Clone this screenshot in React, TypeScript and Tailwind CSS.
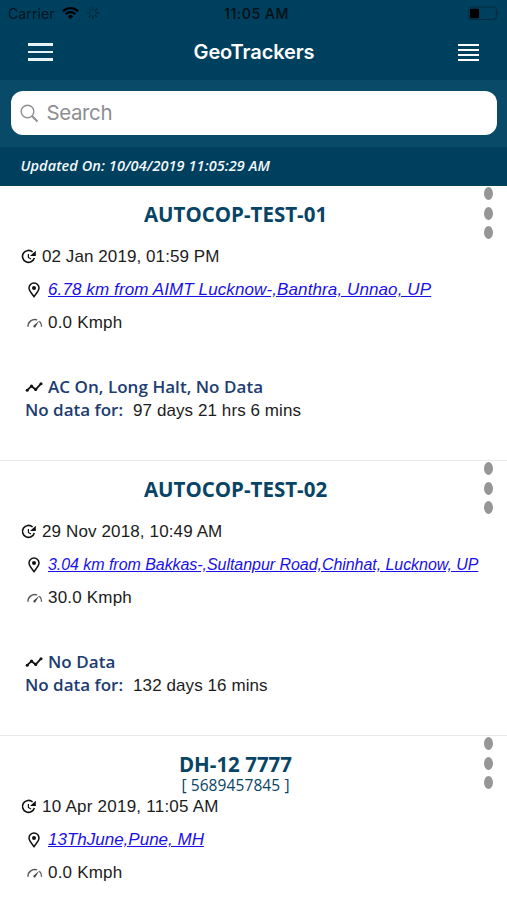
import React from 'react';

interface Vehicle {
  name: string;
  code?: string;
  date: string;
  dateClass?: string;
  location: string;
  locationClass: string;
  speed: string;
  status?: string;
  noData?: string;
}

const vehicles: Vehicle[] = [
  {
    name: 'AUTOCOP-TEST-01',
    date: '02 Jan 2019, 01:59 PM',
    location: '6.78 km from AIMT Lucknow-,Banthra, Unnao, UP',
    locationClass: 'tracking-[0.11px]',
    speed: '0.0 Kmph',
    status: 'AC On, Long Halt, No Data',
    noData: '97 days 21 hrs 6 mins',
  },
  {
    name: 'AUTOCOP-TEST-02',
    date: '29 Nov 2018, 10:49 AM',
    dateClass: 'tracking-[0.13px]',
    location: '3.04 km from Bakkas-,Sultanpur Road,Chinhat, Lucknow, UP',
    locationClass: 'text-[16px] tracking-[-0.05px]',
    speed: '30.0 Kmph',
    status: 'No Data',
    noData: '132 days 16 mins',
  },
  {
    name: 'DH-12 7777',
    code: '[ 5689457845 ]',
    date: '10 Apr 2019, 11:05 AM',
    dateClass: 'tracking-[0.24px]',
    location: '13ThJune,Pune, MH',
    locationClass: 'tracking-[0px]',
    speed: '0.0 Kmph',
  },
];

const ClockIcon = () => (
  <svg className="w-4 h-4 shrink-0" viewBox="0 0 16 16" fill="none" stroke="#111" strokeWidth="1.600">
    <path d="M11.600 3A6 6 0 1 0 13.300 9" />
    <path d="M14.800 1.700v5.300H9z" fill="#111" stroke="none" />
    <path d="M7.400 5v3.500l2.600 1.500" strokeWidth="1.200" />
  </svg>
);

const PinIcon = () => (
  <svg className="w-3 h-4 shrink-0" viewBox="0 0 12 16" fill="none" stroke="#111" strokeWidth="1.500">
    <path d="M6 14.600C3.800 11.500 1 8.700 1 6a5 5 0 0 1 10 0c0 2.700-2.800 5.500-5 8.600z" />
    <circle cx="6" cy="5.900" r="2" fill="#111" stroke="none" />
  </svg>
);

const GaugeIcon = () => (
  <svg className="w-4 h-3 shrink-0" viewBox="0 0 16 12" fill="none" stroke="#555" strokeWidth="1.300">
    <path d="M1 9.800A6.800 6.800 0 0 1 10.200 3M12.400 4.300a6.800 6.800 0 0 1 2.200 5.500" />
    <path d="M12.200 3.800L8.700 9.600A1.200 1.200 0 1 1 7 8.300z" fill="#444" stroke="none" />
  </svg>
);

const TrendIcon = () => (
  <svg className="w-[18px] h-3 shrink-0" viewBox="0 0 18 12" fill="none" stroke="#111" strokeWidth="1.800">
    <path d="M2 9.400l4.500-4.200 4.200 3.300L16 2.700" />
    <g fill="#111" stroke="none">
      <circle cx="2.200" cy="9.300" r="1.500" />
      <circle cx="6.500" cy="5.100" r="1.600" />
      <circle cx="10.700" cy="8.400" r="1.600" />
      <circle cx="16" cy="2.700" r="1.500" />
    </g>
  </svg>
);

const StatusBar = () => (
  <div className="h-[27px] grid grid-cols-3 items-center px-2 text-[14px] text-[#03141d] font-['Inter',sans-serif]">
    <div className="flex items-center">
      <span className="tracking-[0.1px]">Carrier</span>
      <svg className="w-[17px] h-3 ml-[7px] -mt-0.5" viewBox="0 0 17 12" fill="none" stroke="#000" strokeWidth="2.300">
        <path d="M.9 4.300a10.700 10.700 0 0 1 15.200 0" />
        <path d="M3.700 7.200a6.800 6.800 0 0 1 9.600 0" />
        <path d="M8.500 12L5.900 9.300a3.700 3.700 0 0 1 5.200 0z" fill="#000" stroke="none" />
      </svg>
      <svg className="w-3 h-3 ml-2 -mt-0.5" viewBox="0 0 12 12" stroke="#061c29" strokeWidth="1.200">
        <path d="M6 0v3.500" opacity=".6" />
        <path d="M10.200 1.800L7.800 4.200" />
        <path d="M12 6H8.500" />
        <path d="M10.200 10.200L7.800 7.800" opacity=".9" />
        <path d="M6 12V8.500" opacity=".8" />
        <path d="M1.800 10.200l2.400-2.400" opacity=".7" />
        <path d="M0 6h3.500" opacity=".6" />
        <path d="M1.800 1.800l2.400 2.400" opacity=".5" />
      </svg>
    </div>
    <div className="text-center font-semibold whitespace-nowrap pl-[6px] tracking-[0.5px]">11:05 AM</div>
    <div className="flex justify-end">
      <svg className="w-[33px] h-[15px]" viewBox="0 0 33 15">
        <rect x="2.500" y="1" width="28" height="12.500" rx="3" fill="none" stroke="#052c40" strokeWidth="1.200" />
        <rect x="4" y="2.700" width="9" height="9.500" rx="1" fill="#000" />
        <path d="M31.500 5.200c1.600.6 1.600 3.700 0 4.300z" fill="#052c40" />
      </svg>
    </div>
  </div>
);

const VehicleRow = ({ vehicle }: { vehicle: Vehicle }) => (
  <div className="relative h-[275px] border-b border-[#e9e9e9] text-[#1c1c1c] text-[17px] whitespace-nowrap">
    {/* Row menu */}
    <button className="absolute right-[14px] top-[1px] flex flex-col gap-[6.500px]">
      {[0, 1, 2].map(i => (
        <span key={i} className="block w-[9px] h-[13px] rounded-[50%] bg-[#969696]" />
      ))}
    </button>

    <div className="h-[58px] pt-[15px] pr-9 text-center text-[#084465] font-['Open_Sans',sans-serif]">
      <h2 className="h-[26px] leading-[26px] text-[20.500px] font-bold">{vehicle.name}</h2>
      {vehicle.code && (
        <p className="h-4 leading-4 text-[15.500px] font-medium tracking-[0.1px]">{vehicle.code}</p>
      )}
    </div>

    <div className="h-[26px] flex items-center pl-[21px] gap-[5px]">
      <ClockIcon />
      <span className={vehicle.dateClass || 'tracking-[0.08px]'}>{vehicle.date}</span>
    </div>
    <div className="h-10 flex items-center pl-[28px] gap-2">
      <PinIcon />
      <a className={`italic underline text-[#1a10e8] ${vehicle.locationClass}`}>{vehicle.location}</a>
    </div>
    <div className="h-[26px] flex items-center pl-[27px] gap-[5px]">
      <GaugeIcon />
      <span className="tracking-[0.2px]">{vehicle.speed}</span>
    </div>

    {vehicle.status && (
      <div className="mt-[39px]">
        <div className="h-[23px] flex items-center pl-[25px] gap-[5px] text-[#203c70] font-semibold font-['Open_Sans',sans-serif]">
          <TrendIcon />
          <span className="tracking-[0.04px]">{vehicle.status}</span>
        </div>
        <div className="h-6 flex items-center pl-[25px] gap-[10px]">
          <span className="text-[#203c70] font-semibold font-['Open_Sans',sans-serif]">No data for:</span>
          <span className="pt-px tracking-[0.08px]">{vehicle.noData}</span>
        </div>
      </div>
    )}
  </div>
);

export default function App() {
  return (
    <div className="w-full h-[900px] overflow-hidden bg-white font-['Liberation_Sans',sans-serif]">
      <header className="bg-[#00405f]">
        <StatusBar />
        <div className="h-[53px] flex items-center justify-between px-7 pb-[3px]">
          <button className="flex flex-col gap-[5px] w-[25px]">
            <span className="block h-[2.500px] bg-[#e6f3f8]" />
            <span className="block h-[2.500px] bg-[#e6f3f8]" />
            <span className="block h-[2.500px] bg-[#e6f3f8]" />
          </button>
          <h1 className="text-white text-[20px] font-semibold font-['Inter',sans-serif] tracking-[-0.1px] -ml-[3px]">GeoTrackers</h1>
          <button className="flex flex-col gap-[3px] w-[21px]">
            <span className="block h-[2px] bg-white" />
            <span className="block h-[2px] bg-white" />
            <span className="block h-[2px] bg-white" />
            <span className="block h-[2px] bg-white" />
          </button>
        </div>

        <div className="h-[67px] px-[10.500px] pt-[11px] bg-[#0a4a69]">
          <div className="h-[44px] rounded-[12px] bg-white flex items-center pl-[9px] gap-2">
            <svg className="w-[19px] h-[19px]" viewBox="0 0 19 19" fill="none" stroke="#8e8e93" strokeWidth="1.400">
              <circle cx="7.500" cy="7.500" r="6.300" />
              <path d="M12 12l5.500 5.500" strokeWidth="2" />
            </svg>
            <span className="text-[20.500px] text-[#8e8e93] font-['Inter',sans-serif] tracking-[-0.4px]">Search</span>
          </div>
        </div>

        <div className="h-[39px] flex items-center pl-[20.500px] pb-px text-[#f4f8fa] text-[14.500px] tracking-[0.08px] italic font-semibold font-['Open_Sans',sans-serif]">
          Updated On: 10/04/2019 11:05:29 AM
        </div>
      </header>

      <main>
        {vehicles.map(v => (
          <VehicleRow key={v.name} vehicle={v} />
        ))}
      </main>
    </div>
  );
}
